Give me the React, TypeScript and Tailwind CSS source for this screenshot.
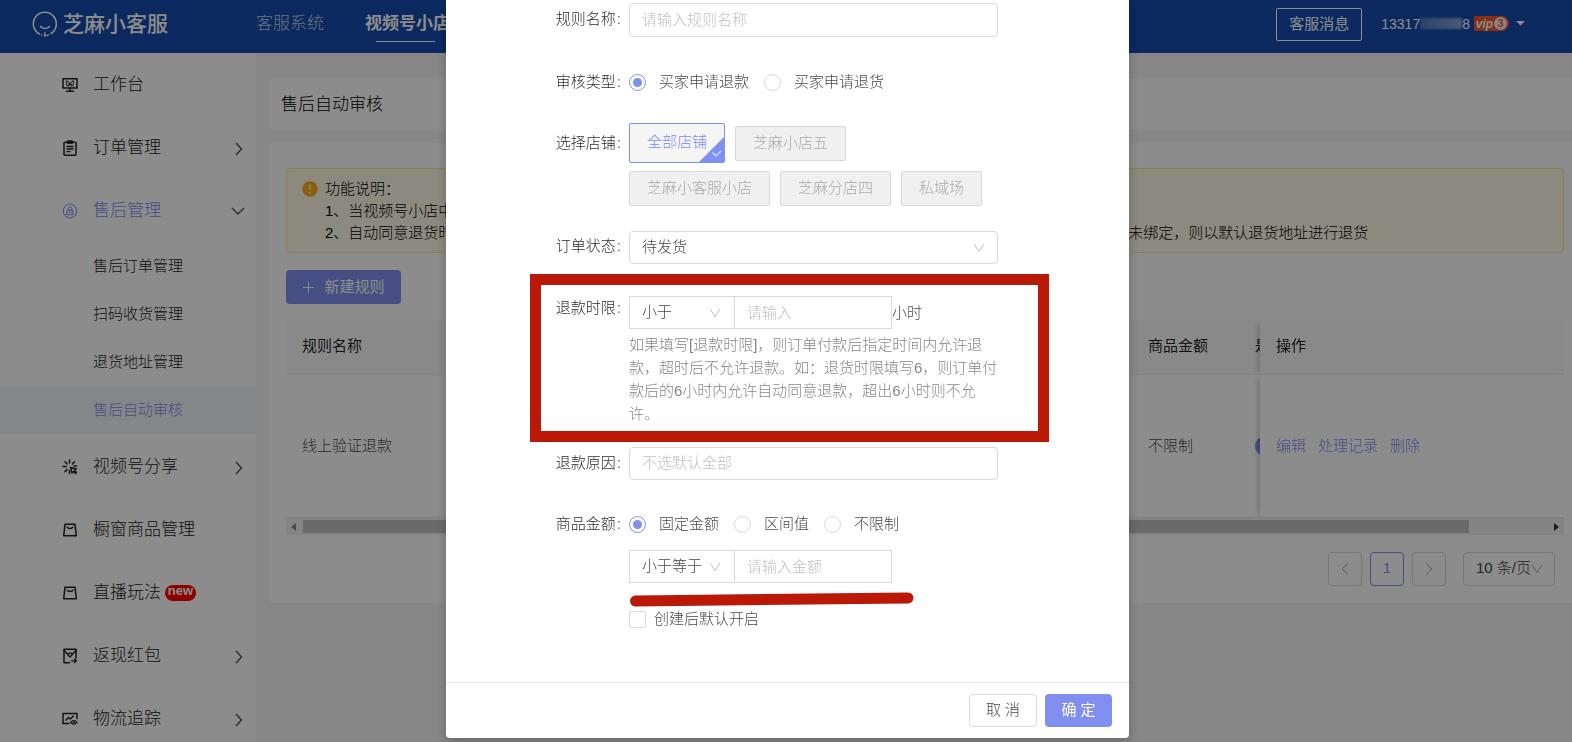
import React from "react";

const stroke = {
  fill: "none",
  stroke: "currentColor",
  strokeWidth: 1.5,
  strokeLinecap: "round" as const,
  strokeLinejoin: "round" as const,
};

function IconDesk() {
  return (
    <svg viewBox="0 0 16 16" className="size-4" {...stroke}>
      <rect x="1" y="1.7" width="14" height="9.3" />
      <path d="M8 11v3M4.5 14.2h7" />
      <path d="M5 4l6 5M11 4L5 9M4.700 4c-.8 2 0 5 1.500 5S8 6.500 8 6.500 8.300 9 9.800 9s2.300-3 1.500-5" strokeWidth="1" />
    </svg>
  );
}

function IconOrder() {
  return (
    <svg viewBox="0 0 16 16" className="size-4" {...stroke}>
      <rect x="2" y="2.200" width="12" height="13" rx="1" />
      <rect x="5.500" y=".8" width="5" height="2.600" fill="currentColor" strokeWidth="1" />
      <path d="M5 6.500h6M5 9h6M5 11.700h3" strokeWidth="1.300" />
    </svg>
  );
}

function IconAfterSale() {
  return (
    <svg viewBox="0 0 16 16" className="size-4" {...stroke} strokeWidth={1}>
      <path d="M8 .8l4.200 1.700 2.300 3.300v4.400l-2.300 3.300L8 15.200l-4.200-1.700L1.500 10.200V5.800l2.300-3.300z" />
      <path d="M4.800 11.700h6.400L10.500 7h-5zM6.300 7V5.500a1.700 1.700 0 0 1 3.400 0V7M6.700 9.700l1.300-1 1.300 1" />
    </svg>
  );
}

function IconShare() {
  return (
    <svg viewBox="0 0 16 16" className="size-4" {...stroke}>
      <path d="M7.500 1v3M3 2.700l2 2.200M1 7.500h3.200M3 12.600l2-2M7.500 14.500v-3M12.500 2.700l-2 2.200M14.500 7h-2.500" />
      <path d="M8.500 8.500l1.500 5.500 1.500-1.500 2 2 1-1-2-2 1.800-1.500z" strokeWidth="1.400" />
    </svg>
  );
}

function IconBag() {
  return (
    <svg viewBox="0 0 16 16" className="size-4" {...stroke}>
      <path d="M3 2.200h10l1.300 11.600H1.700z" />
      <path d="M5 5c1 2 5 2 6 0" strokeWidth="1.300" />
    </svg>
  );
}

function IconPacket() {
  return (
    <svg viewBox="0 0 16 16" className="size-4" {...stroke}>
      <path d="M7.500 14.800H2V1.200h12V10" />
      <path d="M2 2.200l4 4.500M14 2.200l-4 4.500M5.500 6.200c1-1.500 4-1.500 5 0L8 9zM9.500 12.800h4.500M12.500 11l2 1.800-2 1.700" strokeWidth="1.300" />
    </svg>
  );
}

function IconTrack() {
  return (
    <svg viewBox="0 0 16 16" className="size-4" {...stroke}>
      <path d="M7 12.500H1V2.500h14v5" />
      <path d="M4 9l2.500-2.500 1.700 1.500L11.500 5M9.300 5.200" />
      <path d="M8.600 11.300c1.700-2.400 4.800-2.400 6.400 0-1.600 2.400-4.700 2.400-6.400 0z" strokeWidth="1.200" />
      <circle cx="11.800" cy="11.300" r=".8" strokeWidth="1" />
    </svg>
  );
}

function Chevron({ d, className }: { d: string; className: string }) {
  return (
    <svg viewBox="0 0 14 14" className={className} fill="none" stroke="currentColor" aria-hidden="true">
      <path d={d} />
    </svg>
  );
}

const DOWN = "M2 3l5 7.500L12 3";
const RIGHT = "M4 1.500L10 7l-6 5.500";
const LEFT = "M10 1.500L4 7l6 5.500";

type Item = {
  text: string;
  icon: React.ReactNode;
  arrow?: "right" | "down";
  badge?: string;
  children?: string[];
};

const menu: Item[] = [
  { text: "工作台", icon: <IconDesk /> },
  { text: "订单管理", icon: <IconOrder />, arrow: "right" },
  {
    text: "售后管理",
    icon: <IconAfterSale />,
    arrow: "down",
    children: ["售后订单管理", "扫码收货管理", "退货地址管理", "售后自动审核"],
  },
  { text: "视频号分享", icon: <IconShare />, arrow: "right" },
  { text: "橱窗商品管理", icon: <IconBag /> },
  { text: "直播玩法", icon: <IconBag />, badge: "new" },
  { text: "返现红包", icon: <IconPacket />, arrow: "right" },
  { text: "物流追踪", icon: <IconTrack />, arrow: "right" },
];

function Header() {
  return (
    <header className="flex h-[53px] shrink-0 items-center bg-[#144cae] text-white">
      <div className="flex w-[256px] shrink-0 items-center gap-[5px] pb-[5px] pl-8">
        <svg viewBox="0 0 26 26" className="size-[26px]" fill="none" stroke="currentColor" strokeWidth="1.500" strokeLinecap="round">
          <path d="M7.500 23A11.500 11.500 0 1 1 19 22.500M12.800 22v3c1.500 0 2.500-.3 3.500-1M9.500 24h.3" />
          <path d="M8.500 15.500c2 2.500 7 2.500 9 0" />
        </svg>
        <span className="text-[21px] leading-[26px] font-medium">芝麻小客服</span>
      </div>
      <nav className="flex flex-1 items-center gap-[41px] pb-[5px] text-[17px] leading-6">
        <a href="#service" className="font-light text-white/75">客服系统</a>
        <a href="#shop" className="relative font-bold">
          视频号小店
          <span className="absolute -bottom-[6px] left-[11px] h-px w-[59px] bg-white" />
        </a>
      </nav>
      <div className="flex items-center gap-[19px] pr-[47px] text-[15px]">
        <button className="mb-1 h-[33px] w-[86px] rounded-xs border border-white">客服消息</button>
        <div className="mb-[6px] flex items-center text-sm">
          <span>13317</span>
          <span className="h-[11px] w-[42px] bg-linear-to-r from-white/25 to-white/50 blur-[1px]" />
          <span>8</span>
          <span className="ml-1 flex h-[15px] w-[35px] items-center justify-center gap-px rounded-tl-[8px] rounded-r-full bg-[#f2572a] text-xs font-bold italic">
            vip
            <span className="flex size-[13px] items-center justify-center rounded-full bg-white/90 text-[11px] text-[#f2572a] not-italic">3</span>
          </span>
          <svg viewBox="0 0 10 6" className="ml-[7px] w-[9px]" fill="currentColor"><path d="M0 0h10L5 5z" /></svg>
        </div>
      </div>
    </header>
  );
}

function Sidebar() {
  return (
    <aside className="w-[256px] shrink-0 bg-white font-light text-[#222]">
      <ul>
        {menu.map((m) => (
          <li key={m.text}>
            <a
              href="#menu"
              className={`flex h-[63px] items-center pr-[11px] pl-[62px] text-[17px] ${m.children ? "text-[#808ff0]" : ""}`}
            >
              {m.icon}
              <span className="ml-[15px]">{m.text}</span>
              {m.badge && (
                <span className="ml-1 flex h-4 w-[31px] items-center justify-center rounded-full bg-[red] pb-[3px] text-[13px] font-bold text-white">
                  {m.badge}
                </span>
              )}
              {m.arrow === "right" && (
                <Chevron d="M5 1l5.500 6L5 13" className="mt-[3px] ml-auto size-[14px] stroke-[1.400] text-[#555]" />
              )}
              {m.arrow === "down" && (
                <Chevron d="M1 4l6 6 6-6" className="ml-auto size-[14px] stroke-[1.400] text-[#555]" />
              )}
            </a>
            {m.children && (
              <ul className="mb-px text-[15px]">
                {m.children.map((c, i) => (
                  <li key={c}>
                    <a
                      href="#sub"
                      className={`flex h-12 items-center pl-[93px] ${i === 3 ? "bg-[#f3f4fb] text-[#808ff0]" : ""}`}
                    >
                      {c}
                    </a>
                  </li>
                ))}
              </ul>
            )}
          </li>
        ))}
      </ul>
    </aside>
  );
}

function RuleTable() {
  return (
    <div className="mt-4">
      <div className="overflow-hidden">
        <table className="w-[1407px] table-fixed border-separate border-spacing-0 text-left text-[15px] font-light">
          <thead>
            <tr className="h-[55px] text-black/90">
              <th className="w-[846px] border-b border-[#e8e8e8] bg-[#fafafa] px-4 pb-0.5 font-normal">规则名称</th>
              <th className="w-[107px] border-b border-[#e8e8e8] bg-[#fafafa] px-4 pb-0.5 font-normal">商品金额</th>
              <th className="w-[150px] border-b border-[#e8e8e8] bg-[#fafafa] px-4 pb-0.5 font-normal">是</th>
              <th className="sticky right-0 z-10 w-[304px] border-b border-[#e8e8e8] bg-[#fafafa] px-4 pb-0.5 font-normal shadow-[-6px_0_6px_-4px_rgba(0,0,0,0.200)]">操作</th>
            </tr>
          </thead>
          <tbody>
            <tr className="h-[143px] text-black/75">
              <td className="border-b border-[#e8e8e8] px-4">线上验证退款</td>
              <td className="border-b border-[#e8e8e8] px-4">不限制</td>
              <td className="border-b border-[#e8e8e8] px-4">
                <button role="switch" aria-checked="true" aria-label="开启" className="block h-5 w-10 rounded-full bg-[#808ff0]" />
              </td>
              <td className="sticky right-0 z-10 border-b border-[#e8e8e8] bg-white px-4 text-[#808ff0] shadow-[-6px_0_6px_-4px_rgba(0,0,0,0.200)]">
                <div className="flex gap-3">
                  <a href="#edit">编辑</a>
                  <a href="#log">处理记录</a>
                  <a href="#delete">删除</a>
                </div>
              </td>
            </tr>
          </tbody>
        </table>
      </div>
      <div className="flex h-[17px] items-center bg-[#f1f1f1] px-[5px]">
        <svg viewBox="0 0 5 8" className="h-2 w-[5px] text-[#888]" fill="currentColor"><path d="M5 0v8L0 4z" /></svg>
        <div className="mr-[85px] ml-[7px] h-[13px] flex-1 bg-[#c1c1c1]" />
        <svg viewBox="0 0 5 8" className="h-2 w-[5px] text-[#333]" fill="currentColor"><path d="M0 0v8l5-4z" /></svg>
      </div>
    </div>
  );
}

function Content() {
  return (
    <main className="min-w-0 flex-1 bg-[#f6f6f6] pt-[25px] pl-[13px]">
      <h1 className="flex h-[52px] items-center rounded-l bg-white pt-0.5 pl-3 text-[17px] font-light">售后自动审核</h1>
      <section className="mt-[13px] rounded-l bg-white pt-[25px] pr-2 pb-[17px] pl-[17px]">
        <div className="flex gap-[7px] overflow-hidden rounded border border-[#ffe58f] bg-[#fffbe6] pt-[9px] pr-4 pb-2 pl-[15px] text-[15px] leading-[22px] font-light whitespace-nowrap">
          <svg viewBox="0 0 16 16" className="mt-[3px] size-4 shrink-0">
            <circle cx="8" cy="8" r="7.700" fill="#faad14" />
            <path d="M8 3.500v5.500M8 11v1.500" stroke="white" strokeWidth="1.300" />
          </svg>
          <div>
            <p>功能说明：</p>
            <p>1、当视频号小店中的售后单符合规则时，系统将自动审核</p>
            <p>2、自动同意退货时，若商品已绑定退货地址，则按照所绑定的退货地址进行退货处理；若该商品在退货地址管理页面中尚未绑定，则以默认退货地址进行退货</p>
          </div>
        </div>
        <button className="mt-[17px] flex h-[34px] w-[115px] items-center justify-center gap-[9px] rounded bg-[#808ff0] text-[15px] text-white">
          <svg viewBox="0 0 14 14" className="size-[13px]" fill="none" stroke="currentColor"><path d="M7 1v12M1 7h12" /></svg>
          新建规则
        </button>
        <RuleTable />
        <div className="mt-[17px] flex justify-end gap-2 pr-[9px] text-[15px] font-light">
          <button aria-label="上一页" className="flex size-[34px] items-center justify-center rounded border border-[#d9d9d9] text-[#aaa]">
            <Chevron d={LEFT} className="size-[14px]" />
          </button>
          <button className="size-[34px] rounded border border-[#808ff0] pb-0.5 text-[#808ff0]">1</button>
          <button aria-label="下一页" className="flex size-[34px] items-center justify-center rounded border border-[#d9d9d9] text-[#aaa]">
            <Chevron d={RIGHT} className="size-[14px]" />
          </button>
          <div className="relative ml-[9px]">
            <select aria-label="每页条数" className="h-[34px] w-[92px] appearance-none rounded border border-[#d9d9d9] pb-0.5 pl-3 text-[#444]">
              <option>10 条/页</option>
            </select>
            <Chevron d={DOWN} className="pointer-events-none absolute top-[10px] right-[11px] size-[14px] text-[#aaa]" />
          </div>
        </div>
      </section>
    </main>
  );
}

function Row({
  label,
  htmlFor,
  className,
  labelClass = "h-[33px]",
  children,
}: {
  label?: string;
  htmlFor?: string;
  className?: string;
  labelClass?: string;
  children: React.ReactNode;
}) {
  return (
    <div className={`relative flex ${className ?? ""}`}>
      <div className={`flex w-[183px] shrink-0 items-center justify-end pr-2 text-black/85 ${labelClass}`}>
        {label && (
          <label htmlFor={htmlFor}>
            {label}
            <span className="ml-px text-black/60">:</span>
          </label>
        )}
      </div>
      <div className="w-[369px]">{children}</div>
    </div>
  );
}

function Radio({ name, label, id, checked }: { name: string; label: string; id?: string; checked?: boolean }) {
  return (
    <label className="flex items-center gap-[13px]">
      <input
        type="radio"
        id={id}
        name={name}
        defaultChecked={checked}
        className="flex size-[17px] appearance-none items-center justify-center rounded-full border border-[#d9d9d9] before:size-[9px] before:rounded-full checked:border-[#808ff0] checked:before:bg-[#808ff0]"
      />
      <span>{label}</span>
    </label>
  );
}

const shopClass = "h-[35px] rounded-xs border border-[#d9d9d9] bg-[#f0f0f0] px-[17px] text-[#aaa]";
const placeholder = "placeholder:text-[#bfbfbf]";

function CompareField({ id, option, hint, unit }: { id: string; option: string; hint: string; unit?: string }) {
  return (
    <div className="flex h-[33px] items-center">
      <div className="relative">
        <select id={id} aria-label={option} className="block h-[33px] w-[105px] appearance-none border border-r-0 border-[#d9d9d9] pb-px pl-3">
          <option>{option}</option>
        </select>
        <Chevron d={DOWN} className="pointer-events-none absolute top-[10px] right-3 size-[14px] text-[#bfbfbf]" />
      </div>
      <input aria-label={hint} placeholder={hint} className={`h-[33px] w-[158px] border border-[#d9d9d9] px-3 ${placeholder}`} />
      {unit && <span className="pt-px">{unit}</span>}
    </div>
  );
}

function RuleDialog() {
  return (
    <div
      role="dialog"
      aria-modal="true"
      className="w-[683px] rounded-b bg-white text-[15px] font-light text-black/75 shadow-[0_4px_12px_rgba(0,0,0,0.250)]"
    >
      <form className="pt-[3px] pb-[51px]">
        <Row label="规则名称" htmlFor="rule-name">
          <input
            id="rule-name"
            placeholder="请输入规则名称"
            className={`h-[34px] w-full rounded border border-[#d9d9d9] px-3 pb-px ${placeholder}`}
          />
        </Row>
        <Row label="审核类型" htmlFor="type-refund" className="mt-[29px]">
          <div className="flex h-[33px] items-center gap-[15px]">
            <Radio name="type" id="type-refund" label="买家申请退款" checked />
            <Radio name="type" label="买家申请退货" />
          </div>
        </Row>
        <Row label="选择店铺" htmlFor="shop-all" className="mt-6" labelClass="h-10">
          <div className="flex flex-wrap items-center gap-x-[10px] gap-y-2 pr-2">
            <button
              type="button"
              id="shop-all"
              className="relative h-10 rounded-xs border border-[#808ff0] bg-[#f5f5f5] px-[17px] pb-0.5 text-[#808ff0]"
            >
              全部店铺
              <svg viewBox="0 0 25 25" className="absolute right-0 bottom-0 size-[25px]">
                <path d="M25 0v25H0z" fill="#808ff0" />
                <path d="M13.500 15.500l3.500 3.500 5-5" fill="none" stroke="#ccd2fa" strokeWidth="1.500" />
              </svg>
            </button>
            <button type="button" className={shopClass}>芝麻小店五</button>
            <button type="button" className={shopClass}>芝麻小客服小店</button>
            <button type="button" className={shopClass}>芝麻分店四</button>
            <button type="button" className={shopClass}>私域场</button>
          </div>
        </Row>
        <Row label="订单状态" htmlFor="order-state" className="mt-[25px]" labelClass="h-[31px]">
          <div className="relative">
            <select id="order-state" className="block h-[33px] w-full appearance-none rounded border border-[#d9d9d9] pb-px pl-3">
              <option>待发货</option>
            </select>
            <Chevron d={DOWN} className="pointer-events-none absolute top-[10px] right-3 size-[14px] text-[#bfbfbf]" />
          </div>
        </Row>
        <Row label="退款时限" htmlFor="limit" className="mt-8" labelClass="h-6">
          <CompareField id="limit" option="小于" hint="请输入" unit="小时" />
          <p className="mt-1 leading-[23px] text-black/50">
            如果填写[退款时限]，则订单付款后指定时间内允许退款，超时后不允许退款。如：退货时限填写6，则订单付款后的6小时内允许自动同意退款，超出6小时则不允许。
          </p>
          <div className="pointer-events-none absolute -top-[22px] right-20 -bottom-[17px] left-[84px] border-[11px] border-[#bb1907]" />
        </Row>
        <Row label="退款原因" htmlFor="reason" className="mt-[22px]">
          <input
            id="reason"
            placeholder="不选默认全部"
            className={`block h-[33px] w-full rounded border border-[#d9d9d9] px-3 pb-0.5 ${placeholder}`}
          />
        </Row>
        <Row label="商品金额" htmlFor="amount-fixed" className="mt-7">
          <div className="mb-[9px] flex h-[33px] items-center gap-[15px]">
            <Radio name="amount" id="amount-fixed" label="固定金额" checked />
            <Radio name="amount" label="区间值" />
            <Radio name="amount" label="不限制" />
          </div>
          <CompareField id="amount-op" option="小于等于" hint="请输入金额" />
          <svg viewBox="0 0 284 18" className="pointer-events-none absolute top-full left-[184px] mt-2 w-[284px]">
            <path d="M5.500 10L278 7" stroke="#bb1907" strokeWidth="11" strokeLinecap="round" />
          </svg>
        </Row>
        <Row className="mt-[25px]" labelClass="h-[23px]">
          <label className="flex h-[23px] items-center gap-2">
            <input type="checkbox" className="size-[17px] appearance-none rounded-xs border border-[#d9d9d9]" />
            <span>创建后默认开启</span>
          </label>
        </Row>
      </form>
      <footer className="flex justify-end gap-2 border-t border-[#e8e8e8] py-[11px] pr-[17px]">
        <button className="h-[33px] w-[68px] rounded border border-[#d9d9d9] pb-px">取 消</button>
        <button className="h-[33px] w-[67px] rounded bg-[#808ff0] pb-px font-normal text-white">确 定</button>
      </footer>
    </div>
  );
}

export default function App() {
  return (
    <div className="relative flex h-screen flex-col overflow-hidden font-['Liberation_Sans','Noto_Sans_CJK_SC',sans-serif]">
      <Header />
      <div className="flex min-h-0 flex-1">
        <Sidebar />
        <Content />
      </div>
      <div className="absolute inset-0 z-20 flex items-start justify-center bg-black/45 pl-[3px]">
        <RuleDialog />
      </div>
    </div>
  );
}
